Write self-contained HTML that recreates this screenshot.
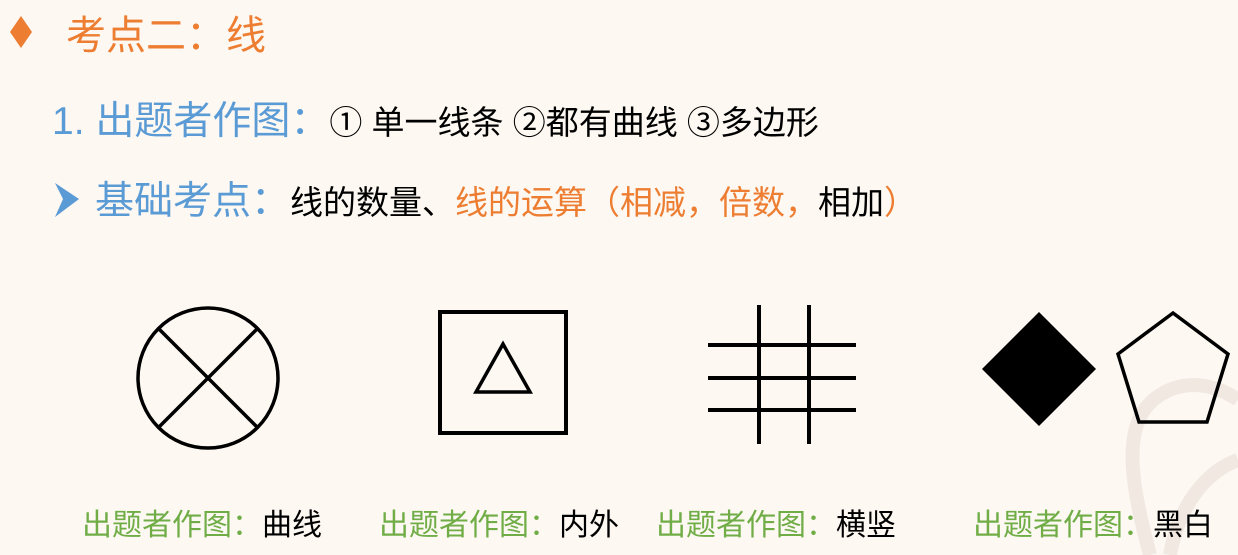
<!DOCTYPE html>
<html><head><meta charset="utf-8"><style>
html,body{margin:0;padding:0;}
body{width:1238px;height:555px;background:#fdf8f2;position:relative;overflow:hidden;font-family:"Liberation Sans","Noto Sans CJK SC",sans-serif;}
.t{position:absolute;white-space:nowrap;line-height:1;}
.o{color:#ED7D31}.b{color:#5B9BD5}.g{color:#70AD47}.k{color:#000}
</style></head><body>
<svg width="1238" height="555" style="position:absolute;left:0;top:0">
<path d="M1150 555 C1130 480 1120 420 1160 395 C1200 370 1238 400 1238 400" fill="none" stroke="#f1e8e2" stroke-width="14"/>
<path d="M1170 555 C1180 500 1210 470 1238 460" fill="none" stroke="#f1e8e2" stroke-width="14"/>
<polygon points="10,32 21,16 32,32 21,48" fill="#ED7D31"/>
<polygon points="55,183 79,199 55,217 63,199" fill="#5B9BD5"/>
<circle cx="208" cy="378" r="70" fill="none" stroke="#000" stroke-width="3.5"/>
<line x1="158" y1="328" x2="258" y2="428" stroke="#000" stroke-width="3.5"/>
<line x1="258" y1="328" x2="158" y2="428" stroke="#000" stroke-width="3.5"/>
<rect x="440" y="312" width="126" height="121" fill="none" stroke="#000" stroke-width="4"/>
<polygon points="503,344 476,392 530,392" fill="none" stroke="#000" stroke-width="3.5"/>
<g stroke="#000" stroke-width="4">
<line x1="759" y1="305" x2="759" y2="444"/><line x1="809" y1="305" x2="809" y2="444"/>
<line x1="708" y1="345" x2="856" y2="345"/><line x1="708" y1="378" x2="856" y2="378"/><line x1="708" y1="410" x2="856" y2="410"/>
</g>
<polygon points="1039,312 1096,369 1039,426 982,369" fill="#000"/>
<polygon points="1173,313 1228,354 1207,422 1139,422 1118,354" fill="none" stroke="#000" stroke-width="3.5"/>
</svg>
<div class="t o" style="left:66px;top:16px;font-size:40px">考点二：线</div>
<div class="t" style="left:52px;top:102px"><span class="b" style="font-size:39px">1. 出题者作图：</span><span class="k" style="font-size:33px">① 单一线条 ②都有曲线 ③多边形</span></div>
<div class="t" style="left:95px;top:182px"><span class="b" style="font-size:39px">基础考点：</span><span class="k" style="font-size:33px">线的数量、</span><span class="o" style="font-size:33px">线的运算（相减，倍数，</span><span class="k" style="font-size:33px">相加</span><span class="o" style="font-size:33px">）</span></div>
<div class="t" style="left:82px;top:511px;font-size:30px"><span class="g">出题者作图：</span><span class="k">曲线</span></div>
<div class="t" style="left:379px;top:511px;font-size:30px"><span class="g">出题者作图：</span><span class="k">内外</span></div>
<div class="t" style="left:656px;top:511px;font-size:30px"><span class="g">出题者作图：</span><span class="k">横竖</span></div>
<div class="t" style="left:973px;top:511px;font-size:30px"><span class="g">出题者作图：</span><span class="k">黑白</span></div>
</body></html>
